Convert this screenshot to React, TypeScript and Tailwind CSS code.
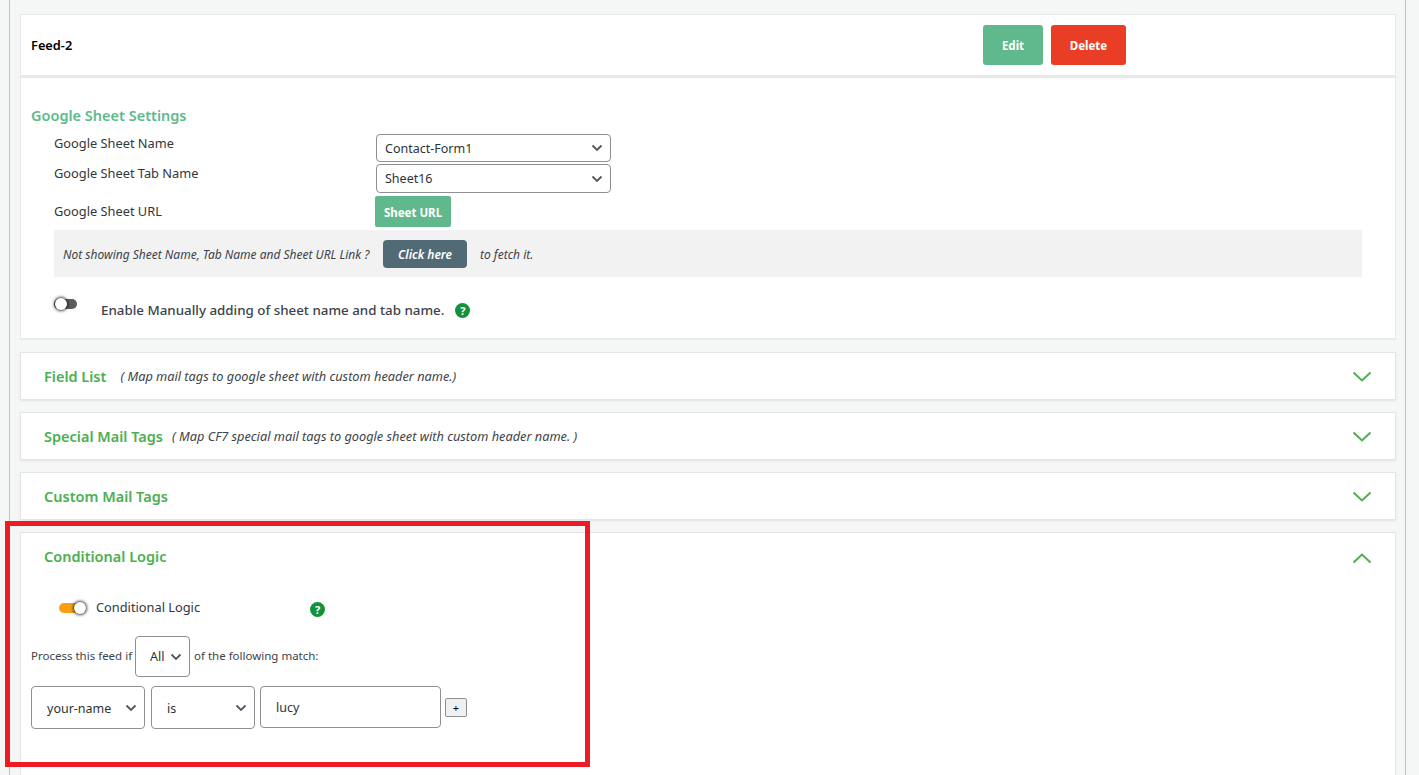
import { type ReactNode } from 'react';

function Chevron({ up = false }: { up?: boolean }) {
  return (
    <svg className="mt-[2px]" width="20" height="12" viewBox="0 0 20 12" fill="none" stroke="#4caf50" strokeWidth="2">
      <path d={up ? 'M1.5 10.5 L10 2.5 L18.5 10.5' : 'M1.5 1.5 L10 9.5 L18.5 1.5'} />
    </svg>
  );
}

function HelpIcon() {
  return (
    <span className="flex h-[15px] w-[15px] items-center justify-center rounded-full bg-[#16913b] text-[11px] font-bold leading-none text-white">
      ?
    </span>
  );
}

function Select({ value, className, pad = 'pl-2 pt-[2px]' }: { value: string; className: string; pad?: string }) {
  return (
    <div className={`relative shrink-0 ${className}`}>
      <select
        defaultValue={value}
        className={`h-full w-full appearance-none rounded-[4px] border border-[#8c8f94] bg-white text-[12.5px] text-[#2c3338] outline-none ${pad}`}
      >
        <option>{value}</option>
      </select>
      <svg
        className="pointer-events-none absolute right-[8px] top-1/2 -translate-y-1/2"
        width="12"
        height="8"
        viewBox="0 0 12 8"
        fill="none"
        stroke="#50575e"
        strokeWidth="1.8"
      >
        <path d="M1.5 1.5 L6 6 L10.5 1.5" />
      </svg>
    </div>
  );
}

function Accordion({ title, note, gap }: { title: string; note?: string; gap?: string }) {
  return (
    <section className="mb-[12px] flex h-[48px] items-center justify-between border border-[#e5e5e5] bg-white pl-[23px] pr-[23px] shadow-[0_1px_2px_rgba(0,0,0,0.08)]">
      <div className="mt-[2px] flex items-center">
        <h3 className="text-[14.5px] font-semibold text-[#4caf50]">{title}</h3>
        {note ? <span className={`text-[12.75px] italic text-[#3c434a] ${gap}`}>{note}</span> : null}
      </div>
      <Chevron />
    </section>
  );
}

function SettingRow({ label, children, className, labelClass }: { label: string; children: ReactNode; className: string; labelClass: string }) {
  return (
    <div className={`flex items-center ${className}`}>
      <span className={`w-[322px] text-[12.8px] text-[#32373c] ${labelClass}`}>{label}</span>
      {children}
    </div>
  );
}

export default function App() {
  return (
    <div className="relative h-[775px] w-[1419px] overflow-hidden bg-[#f5f6f6] font-['Noto_Sans',sans-serif]">
      <main className="ml-[9px] h-full w-[1397px] border-x border-[#c3c4c7] pl-[10px] pr-[9px] pt-[14px]">
        <header className="flex h-[62px] items-center border border-[#e8e8e8] bg-white pl-[10px]">
          <span className="w-[952px] pt-px text-[12.8px] font-semibold text-black">Feed-2</span>
          <button type="button" className="h-[40px] w-[60px] rounded-[3px] bg-[#60b98c] pt-px text-[11.5px] font-bold text-white">
            Edit
          </button>
          <button type="button" className="ml-[8px] h-[40px] w-[75px] rounded-[3px] bg-[#e93e25] pt-px text-[11.5px] font-bold text-white">
            Delete
          </button>
        </header>

        <section className="mb-[13px] h-[263px] border border-t-2 border-[#e8e8e8] bg-white pl-[10px] pt-[26px] shadow-[0_1px_1px_rgba(0,0,0,0.04)]">
          <h2 className="h-[22px] text-[14.5px] font-semibold leading-[22px] text-[#5dbb8b]">Google Sheet Settings</h2>
          <div className="pl-[23px]">
            <div className="mt-[8px]">
              <SettingRow label="Google Sheet Name" className="h-[28px]" labelClass="-mt-[8px]">
                <Select value="Contact-Form1" className="h-[28px] w-[235px]" />
              </SettingRow>
              <SettingRow label="Google Sheet Tab Name" className="mt-[2px] h-[29px]" labelClass="-mt-[10px]">
                <Select value="Sheet16" className="h-[29px] w-[235px]" />
              </SettingRow>
              <SettingRow label="Google Sheet URL" className="mt-[3px] h-[31px]" labelClass="mt-0">
                <button type="button" className="-ml-px h-[31px] w-[76px] rounded-[2px] bg-[#60b98c] pt-[3px] text-[11.5px] font-bold text-white">
                  Sheet URL
                </button>
              </SettingRow>
            </div>
            <div className="mt-[3px] flex h-[47px] w-[1308px] items-center bg-[#f2f2f2] pl-[9px] pt-[2px] text-[12px] italic text-[#3c434a]">
              <span className="w-[320px]">Not showing Sheet Name, Tab Name and Sheet URL Link ?</span>
              <button type="button" className="-mt-[2px] h-[28px] w-[84px] rounded-[4px] bg-[#526a75] pt-[2px] text-[12px] font-semibold italic text-white">
                Click here
              </button>
              <span className="ml-[13px]">to fetch it.</span>
            </div>
            <div className="mt-[21px] flex">
              <span className="relative mt-px block h-[10px] w-[23px] rounded-full bg-[#5f5a5c]">
                <span className="absolute -top-px left-[1px] h-[12px] w-[12px] rounded-full bg-white shadow-[0_0_3px_1px_rgba(0,0,0,0.75)]" />
              </span>
              <span className="ml-[24px] mt-[2px] text-[13.35px] font-medium leading-[20px] text-[#3c434a]">
                Enable Manually adding of sheet name and tab name.
              </span>
              <span className="ml-[11px] mt-[5px]">
                <HelpIcon />
              </span>
            </div>
          </div>
        </section>

        <Accordion title="Field List" note="( Map mail tags to google sheet with custom header name.)" gap="ml-[14px]" />
        <Accordion title="Special Mail Tags" note="( Map CF7 special mail tags to google sheet with custom header name. )" gap="ml-[9px]" />
        <Accordion title="Custom Mail Tags" />

        <section className="h-[260px] border border-[#e5e5e5] bg-white pl-[10px] pr-[23px]">
          <div className="flex h-[48px] items-center justify-between pl-[13px]">
            <h3 className="text-[14.5px] font-semibold text-[#4caf50]">Conditional Logic</h3>
            <Chevron up />
          </div>
          <div className="mt-[17px] flex h-[20px] items-center pl-[28px]">
            <span className="relative block h-[10px] w-[27px] rounded-full bg-[#f8a012]">
              <span className="absolute -top-px right-0 h-[12px] w-[12px] rounded-full bg-white shadow-[0_0_3px_1px_rgba(0,0,0,0.75)]" />
            </span>
            <span className="ml-[10px] w-[214px] text-[12.8px] text-[#32373c]">Conditional Logic</span>
            <span className="mt-[3px]">
              <HelpIcon />
            </span>
          </div>
          <div className="mt-[18px] flex h-[41px] items-center text-[11.5px] text-[#3c434a]">
            <span className="-mt-[2px] w-[104px] whitespace-nowrap">Process this feed if</span>
            <Select value="All" className="h-[41px] w-[55px]" pad="pl-[14px] pt-[2px]" />
            <span className="-mt-[2px] ml-[4px]">of the following match:</span>
          </div>
          <div className="mt-[9px] flex items-start">
            <Select value="your-name" className="h-[43px] w-[114px]" pad="pl-[15px] pt-[4px]" />
            <Select value="is" className="ml-[6px] h-[43px] w-[104px]" pad="pl-[15px] pt-[4px]" />
            <input
              defaultValue="lucy"
              className="ml-[5px] h-[42px] w-[181px] rounded-[4px] border border-[#8c8f94] bg-white pl-[15px] text-[12.5px] text-[#2c3338] outline-none"
            />
            <button type="button" className="ml-[4px] mt-[12px] h-[19px] w-[22px] rounded-[2px] border border-[#8c8f94] bg-[#f0f0f0] text-[11px] leading-none text-black">
              +
            </button>
          </div>
        </section>
      </main>

      <div className="absolute left-[5px] top-[521px] h-[246px] w-[585px] border-[5px] border-[#ed1c24]" />
    </div>
  );
}
